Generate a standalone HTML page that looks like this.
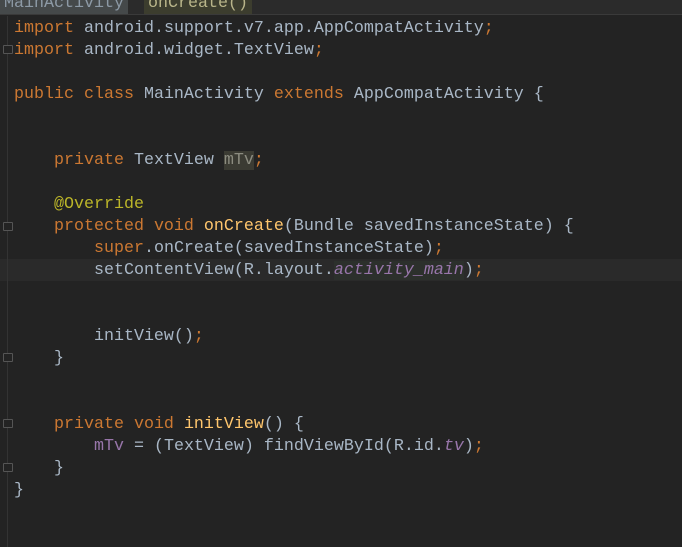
<!DOCTYPE html>
<html><head><style>
html,body{margin:0;padding:0;background:#232323;width:682px;height:547px;overflow:hidden}
.hdr{position:absolute;left:0;top:0;width:682px;height:14px;background:#2b2b2b;border-bottom:1px solid #3a3a3a;overflow:hidden}
.bc{position:absolute;top:-6px;height:20px;font:16.67px "Liberation Mono",monospace;line-height:20px;color:#8d9aa6;padding:0 4px}
.gut{position:absolute;left:7px;top:16px;width:1px;height:531px;background:#333}
.cur{position:absolute;left:0;top:259px;width:682px;height:22px;background:#2a2a2a}
pre{position:absolute;left:14px;top:18px;margin:0;font:16.67px "Liberation Mono",monospace;line-height:22px;color:#a9b7c6}
.k{color:#cc7832}.m{color:#ffc66d}.a{color:#bbb529}.f{color:#9876aa}.i{font-style:italic}
.fold{position:absolute;left:3px;width:8px;height:7px;border:1px solid #555;border-radius:1px;background:#232323}
</style></head><body>
<div class="hdr"><span class="bc" style="left:0;background:#45494a">MainActivity</span><span class="bc" style="left:144px;background:#3c3d2e;color:#b9b58a">onCreate()</span></div>
<div class="cur"></div>
<div class="gut"></div>
<div class="fold" style="top:45px"></div>
<div class="fold" style="top:222px"></div>
<div class="fold" style="top:353px"></div>
<div class="fold" style="top:419px"></div>
<div class="fold" style="top:463px"></div>
<pre><span class="k">import</span> android.support.v7.app.AppCompatActivity<span class="k">;</span>
<span class="k">import</span> android.widget.TextView<span class="k">;</span>

<span class="k">public class</span> MainActivity <span class="k">extends</span> AppCompatActivity {


    <span class="k">private</span> TextView <span class="f" style="background:#3b3b33;color:#8c8c80">mTv</span><span class="k">;</span>

    <span class="a">@Override</span>
    <span class="k">protected void</span> <span class="m">onCreate</span>(Bundle savedInstanceState) {
        <span class="k">super</span>.onCreate(savedInstanceState)<span class="k">;</span>
        setContentView(R.layout.<span class="f i" style="background:#2c302c">activity_main</span>)<span class="k">;</span>


        initView()<span class="k">;</span>
    }


    <span class="k">private void</span> <span class="m">initView</span>() {
        <span class="f">mTv</span> = (TextView) findViewById(R.id.<span class="f i">tv</span>)<span class="k">;</span>
    }
}</pre>
</body></html>
